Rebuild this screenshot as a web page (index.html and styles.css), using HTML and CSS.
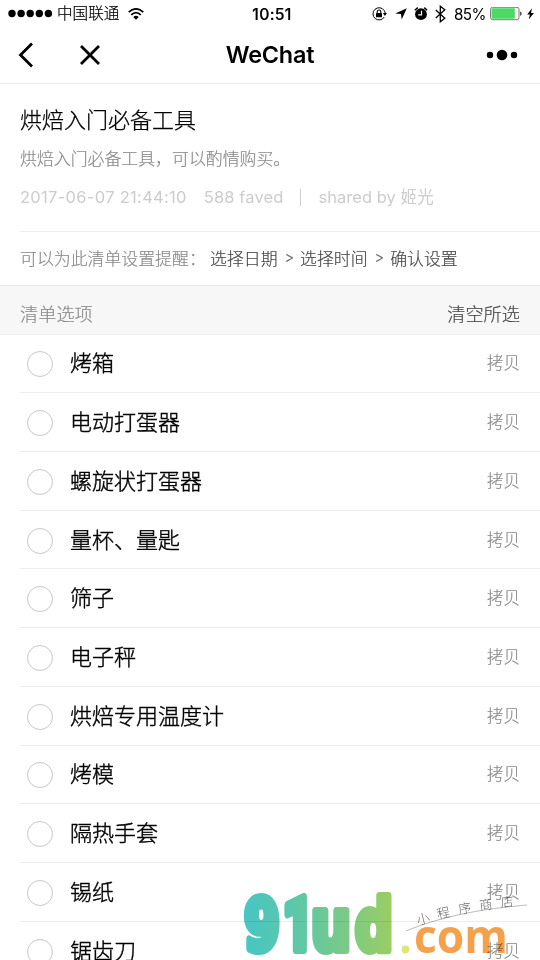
FILE: index.html
```
<!DOCTYPE html>
<html lang="zh-CN">
<head>
<meta charset="utf-8">
<title>WeChat</title>
<link rel="stylesheet" href="styles.css">
</head>
<body>
<div class="screen">
  <header>
    <div class="status">
      <div class="status-left">
        <svg class="signal" width="44" height="10" viewBox="0 0 44 10"><circle cx="4" cy="4.5" r="3.7"/><circle cx="13.1" cy="4.5" r="3.7"/><circle cx="22.2" cy="4.5" r="3.7"/><circle cx="31.3" cy="4.5" r="3.7"/><circle cx="40.4" cy="4.5" r="3.7"/></svg>
        <span class="carrier">中国联通</span>
        <svg class="wifi" width="16" height="12" viewBox="0 0 16 12"><g fill="none" stroke="#000" stroke-width="1.7"><path d="M.7 4.2Q8-2.5 15.3 4.2"/><path d="M3.2 6.9Q8 2.4 12.8 6.9"/></g><path d="M5.3 9Q8 6.4 10.7 9L8 11.8Z"/></svg>
      </div>
      <span class="clock">10:51</span>
      <div class="status-right">
        <svg class="lock" width="15" height="14" viewBox="0 0 15 14"><path d="M12.2 3.5A6.1 6.1 0 1 0 12.3 10M12.2 3.5Q13 4.7 13.1 6" fill="none" stroke="#000"/><path d="M10.9 6h4l-2 3z"/><rect x="4" y="6" width="6" height="4.3" rx=".4"/><path d="M5.2 6.2V4.8a1.8 1.8 0 0 1 3.6 0v1.4" fill="none" stroke="#000" stroke-width="1.1"/></svg>
        <svg class="arrow" width="12" height="12" viewBox="0 0 12 12"><path d="M11.8.2 6.7 11.6 6 6 .3 5.5Z"/></svg>
        <svg class="alarm" width="14" height="14" viewBox="0 0 14 14"><circle cx="7" cy="7.2" r="5.9"/><path d="M.8 3.2 3.8.6M13.2 3.2 10.2.6" stroke="#000" stroke-width="1.4"/><path d="M7.5 3.8v4H4.2" fill="none" stroke="#fff" stroke-width="1.2"/></svg>
        <svg class="bluetooth" width="11" height="18" viewBox="0 0 11 18"><path d="m.8 5 9 8.2-4.5 3.6V1.2l4.5 3.6-9 8.2" fill="none" stroke="#000" stroke-width="1.3"/></svg>
        <span class="percent">85%</span>
        <svg class="battery" width="32" height="14" viewBox="0 0 32 14"><rect x=".6" y=".3" width="28.4" height="12.4" rx="2" fill="#fff" stroke="#777" stroke-width="1"/><rect x="1.6" y="1.3" width="23.2" height="10.4" rx=".8" fill="#4cd964"/><path d="M30 4.5q1.8.6 1.8 2.2T30 8.9z" fill="#555"/></svg>
        <svg class="bolt" width="7" height="12" viewBox="0 0 7 12"><path d="M5 .3.2 6.6h2.7L1.8 11.5 6.8 5H4Z"/></svg>
      </div>
    </div>
    <nav>
      <div class="nav-buttons">
        <svg width="16" height="26" viewBox="0 0 16 26"><path d="M14 1.5 2.5 13 14 24.5" fill="none" stroke="#000" stroke-width="2.8"/></svg>
        <svg width="20" height="20" viewBox="0 0 20 20"><path d="m1 1 18 18M19 1 1 19" stroke="#000" stroke-width="2.8"/></svg>
      </div>
      <h1>WeChat</h1>
      <svg class="more" width="32" height="12" viewBox="0 0 32 12"><circle cx="4" cy="6" r="3.2"/><circle cx="16" cy="6" r="5.3"/><circle cx="28" cy="6" r="3.2"/></svg>
    </nav>
  </header>
  <section class="intro">
    <h2>烘焙入门必备工具</h2>
    <p class="desc">烘焙入门必备工具，可以酌情购买。</p>
    <p class="meta"><span class="date">2017-06-07 21:44:10</span><span class="faved">588 faved</span><i></i><span class="shared">shared by 姬光</span></p>
  </section>
  <div class="remind"><span class="remind-label">可以为此清单设置提醒：</span><span>选择日期</span><b>&gt;</b><span>选择时间</span><b>&gt;</b><span>确认设置</span></div>
  <div class="list-head"><span>清单选项</span><span class="clear">清空所选</span></div>
  <ul>
    <li><i></i><span>烤箱</span><em>拷贝</em></li>
    <li><i></i><span>电动打蛋器</span><em>拷贝</em></li>
    <li><i></i><span>螺旋状打蛋器</span><em>拷贝</em></li>
    <li><i></i><span>量杯、量匙</span><em>拷贝</em></li>
    <li><i></i><span>筛子</span><em>拷贝</em></li>
    <li><i></i><span>电子秤</span><em>拷贝</em></li>
    <li><i></i><span>烘焙专用温度计</span><em>拷贝</em></li>
    <li><i></i><span>烤模</span><em>拷贝</em></li>
    <li><i></i><span>隔热手套</span><em>拷贝</em></li>
    <li><i></i><span>锡纸</span><em>拷贝</em></li>
    <li><i></i><span>锯齿刀</span><em>拷贝</em></li>
  </ul>
  <svg class="watermark" width="300" height="80" viewBox="240 880 300 80">
    <defs><linearGradient id="brand" gradientUnits="userSpaceOnUse" x1="243" y1="0" x2="393" y2="0"><stop offset="0" stop-color="#48c5c5"/><stop offset=".45" stop-color="#64c89f"/><stop offset="1" stop-color="#9acd63"/></linearGradient></defs>
    <g class="brand">
      <text x="244" y="949.5" textLength="36" lengthAdjust="spacingAndGlyphs">9</text>
      <text class="one" x="283" y="949.5" textLength="30" lengthAdjust="spacingAndGlyphs">1</text>
      <text x="311" y="949.5" textLength="40" lengthAdjust="spacingAndGlyphs">u</text>
      <text x="355" y="949.5" textLength="38" lengthAdjust="spacingAndGlyphs">d</text>
    </g>
    <circle cx="405.5" cy="949.5" r="3.9" fill="#dce775"/>
    <text class="com" x="414" y="953" textLength="94" lengthAdjust="spacingAndGlyphs">com</text>
    <path d="M406 931Q453 911 527 905" fill="none" stroke="#aaa" stroke-width=".8"/>
    <g class="store">
      <text transform="translate(418 925) rotate(-14)">小</text>
      <text transform="translate(438 919) rotate(-12)">程</text>
      <text transform="translate(459 914) rotate(-9)">序</text>
      <text transform="translate(480 910) rotate(-7)">商</text>
      <text transform="translate(501 907) rotate(-5)">店</text>
    </g>
  </svg>
</div>
</body>
</html>
```
FILE: styles.css
```
* { box-sizing: border-box; }
body { margin: 0; background: #fff; overflow: hidden; }
.screen {
  position: relative;
  width: 540px;
  height: 960px;
  overflow: hidden;
  background: #fff;
  font-family: Inter, "Noto Sans CJK SC", sans-serif;
  font-weight: 300;
  color: #000;
}
svg { display: block; flex: none; }
h1, h2, p, ul { margin: 0; padding: 0; font-weight: inherit; }
header { height: 84px; border-bottom: 1px solid #ececec; }
.status {
  display: grid;
  grid-template-columns: 1fr auto 1fr;
  align-items: center;
  height: 27px;
  padding: 0 6px 0 10px;
}
.status-left, .status-right { display: flex; align-items: center; }
.status-right { justify-content: flex-end; }
.signal { margin-left: -2px; }
.carrier { margin-left: 5px; padding-top: 1px; font-size: 15.6px; line-height: 26px; -webkit-text-stroke: .2px; }
.wifi { margin-left: 9px; }
.clock { padding-top: 1px; font-size: 15.8px; font-weight: 500; letter-spacing: .3px; -webkit-text-stroke: .2px; }
.arrow { margin-left: 8px; }
.alarm { margin-left: 7px; }
.bluetooth { margin-left: 7px; }
.percent { margin-left: 8px; padding-top: 1px; font-size: 15.2px; font-weight: 400; letter-spacing: -.5px; }
.battery { margin-left: 4px; }
.bolt { margin-left: 5px; }
nav {
  display: grid;
  grid-template-columns: 1fr auto 1fr;
  align-items: center;
  height: 56px;
  padding: 0 22px 0 18px;
}
.nav-buttons { display: flex; align-items: center; gap: 46px; }
h1 { padding-left: 4px; font-size: 23.4px; line-height: 56px; font-weight: 600; letter-spacing: -.2px; }
.more { justify-self: end; }
.intro { height: 148px; margin-left: 20px; padding-top: 20px; border-bottom: 1px solid #ececec; }
h2 { font-size: 22px; line-height: 32px; -webkit-text-stroke: .25px; }
.desc { margin-top: 10px; font-size: 16.9px; line-height: 26px; color: #888; -webkit-text-stroke: .15px; }
.meta {
  display: flex;
  align-items: center;
  height: 26px;
  margin-top: 12px;
  font-size: 16.5px;
  letter-spacing: .3px;
  font-weight: 400;
  line-height: 26px;
  color: #ccc;
  white-space: nowrap;
}
.faved { margin-left: 17px; letter-spacing: .1px; }
.shared { letter-spacing: .05px; }
.meta i { width: 1px; height: 17px; margin: 0 17px; background: #ccc; }
.remind {
  display: flex;
  align-items: center;
  height: 53px;
  padding: 0 0 2px 20px;
  font-size: 16.9px;
  color: #444;
  white-space: nowrap;
  -webkit-text-stroke: .15px;
}
.remind-label { width: 190px; color: #888; }
.remind b { width: 22.5px; padding-left: 1px; text-align: center; font-size: 15px; font-weight: 300; color: #666; }
.list-head {
  display: flex;
  justify-content: space-between;
  align-items: center;
  height: 50px;
  padding: 6px 20px 0;
  border-top: 1px solid #e8e8e8;
  border-bottom: 1px solid #ececec;
  background: #f7f7f7;
  font-size: 18.2px;
  color: #888;
  -webkit-text-stroke: .15px;
}
.clear { color: #444; }
ul { margin-top: -.5px; list-style: none; }
li {
  display: flex;
  align-items: center;
  height: 58.72px;
  margin-left: 20px;
  padding: 0 20px 0 7px;
  border-bottom: 1px solid #ececec;
}
li i { width: 26px; height: 26px; margin-top: 2px; border: 1.5px solid #c8c8c8; border-radius: 50%; }
li span { flex: 1; margin-left: 17px; font-size: 22px; line-height: 32px; -webkit-text-stroke: .4px; }
li em { font-size: 16.5px; font-style: normal; line-height: 24px; color: #888; -webkit-text-stroke: .15px; }
.watermark { position: absolute; left: 240px; top: 880px; mix-blend-mode: multiply; }
.brand {
  font: 700 72px "DejaVu Sans", sans-serif;
  fill: url(#brand);
  stroke: url(#brand);
  stroke-width: 8px;
  stroke-linejoin: round;
}
.brand .one { font: 900 74px Roboto, sans-serif; }
.com { font: 700 47px "Open Sans", sans-serif; fill: #f5a14b; }
.store { font: 300 13px "Noto Sans CJK SC", sans-serif; fill: #666; }
```
